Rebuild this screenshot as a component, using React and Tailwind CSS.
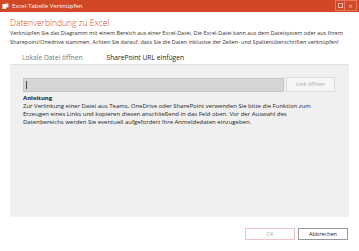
import React from 'react';

export default function App() {
  return (
    <div className="w-[359px] h-[251px] bg-white flex flex-col overflow-hidden" style={{ fontFamily: '"Open Sans", "Noto Sans", sans-serif' }}>
      {/* Title bar */}
      <div className="h-[12px] bg-[#d24726] flex items-center relative shrink-0">
        <svg width="7" height="7" viewBox="0 0 7 7" className="ml-[2px]">
          <rect x="0.5" y="1" width="3.5" height="5" fill="#fff" />
          <rect x="3" y="0.5" width="3.5" height="4" fill="#fff" opacity="0.85" />
        </svg>
        <span className="ml-[3px] text-white text-[6px] leading-[12px]">Excel-Tabelle Verknüpfen</span>
        <div className="ml-auto flex h-[12px] mr-[2px]">
          <div className="w-[10px] h-[11px] border border-[#e27a60] flex items-center justify-center">
            <div className="w-[5px] h-[5px] border border-[#f3b8a8]" />
          </div>
          <div className="w-[12px] h-[11px] border border-l-0 border-[#e27a60] flex items-center justify-center text-[#f6c2b4] text-[8px] leading-none">×</div>
        </div>
      </div>

      {/* Content */}
      <div className="px-[10px] flex flex-col">
        <div className="mt-[6px] text-[8.5px] leading-[10px] text-[#d24726] font-light">Datenverbindung zu Excel</div>
        <div className="mt-[1px] text-[5.5px] leading-[8.5px] text-[#333] w-[340px]">
          Verknüpfen Sie das Diagramm mit einem Bereich aus einer Excel-Datei. Die Excel-Datei kann aus dem Dateisystem oder aus Ihrem Sharepoint/Onedrive stammen. Achten Sie darauf, dass Sie die Daten inklusive der Zeilen- und Spaltenüberschriften verknüpfen!
        </div>

        {/* Tabs */}
        <div className="mt-[7px] flex text-[6.7px] leading-[10px]">
          <span className="ml-[12px] text-[#777]">Lokale Datei öffnen</span>
          <span className="ml-[24px] text-[#222]">SharePoint URL einfügen</span>
        </div>

        {/* Panel */}
        <div className="mt-[1px] h-[153px] bg-[#f0f0f0] border-t border-[#e2e2e2] px-[13px] pt-[12px] flex flex-col">
          <div className="flex items-center">
            <div className="w-[261px] h-[14px] bg-[#d5d5d5] border border-[#c6c6c6] flex items-center">
              <div className="ml-[2px] w-[1px] h-[8px] bg-[#444]" />
            </div>
            <div className="ml-[2px] w-[49px] h-[15px] bg-[#f6f6f6] border border-[#dcdcdc] flex items-center justify-center text-[5.5px] text-[#aaa]">Link öffnen</div>
          </div>
          <div className="mt-[2px] text-[6px] leading-[8px] font-bold text-[#222]">Anleitung</div>
          <div className="text-[6px] leading-[8px] text-[#222] w-[300px]">
            Zur Verlinkung einer Datei aus Teams, OneDrive oder SharePoint verwenden Sie bitte die Funktion zum Erzeugen eines Links und kopieren diesen anschließend in das Feld oben. Vor der Auswahl des Datenbereichs werden Sie eventuell aufgefordert Ihre Anmeldedaten einzugeben.
          </div>
        </div>
      </div>

      {/* Footer */}
      <div className="mt-[11px] flex justify-end pr-[11px] gap-[3px]">
        <div className="w-[50px] h-[12px] border border-[#f0c4c4] bg-white flex items-center justify-center text-[5.5px] text-[#aaa]">OK</div>
        <div className="w-[50px] h-[12px] border border-[#999] bg-white flex items-center justify-center text-[5.5px] text-[#222]">Abbrechen</div>
      </div>
    </div>
  );
}
